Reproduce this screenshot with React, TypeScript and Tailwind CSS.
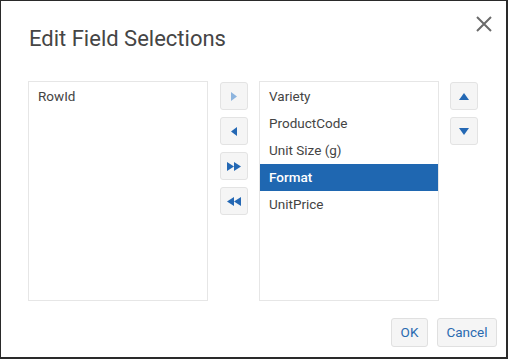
import React from "react";

const rightFields = ["Variety", "ProductCode", "Unit Size (g)", "Format", "UnitPrice"];

const Tri = ({ dir, light }: { dir: "r" | "l" | "u" | "d"; light?: boolean }) => {
  const fill = light ? "#8db4de" : "#2468b4";
  const pts: Record<string, string> = {
    r: "1,0 7,4.5 1,9",
    l: "7,0 1,4.5 7,9",
    u: "0,7 5,0 10,7",
    d: "0,0 10,0 5,7",
  };
  const vb = dir === "u" || dir === "d" ? "0 0 10 7" : "0 0 8 9";
  const w = dir === "u" || dir === "d" ? 10 : 8;
  const h = dir === "u" || dir === "d" ? 7 : 9;
  return (
    <svg width={w} height={h} viewBox={vb}>
      <polygon points={pts[dir]} fill={fill} />
    </svg>
  );
};

const Double = ({ dir }: { dir: "r" | "l" }) => (
  <svg width="14" height="9" viewBox="0 0 14 9">
    {dir === "r" ? (
      <>
        <polygon points="0,0 7,4.5 0,9" fill="#2468b4" />
        <polygon points="7,0 14,4.5 7,9" fill="#2468b4" />
      </>
    ) : (
      <>
        <polygon points="7,0 0,4.5 7,9" fill="#2468b4" />
        <polygon points="14,0 7,4.5 14,9" fill="#2468b4" />
      </>
    )}
  </svg>
);

const IconBtn = ({ children }: { children: React.ReactNode }) => (
  <button
    type="button"
    className="flex h-[28px] w-[28px] items-center justify-center rounded-[3px] border border-[#e3e3e3] bg-[#f5f5f5]"
  >
    {children}
  </button>
);

export default function App() {
  return (
    <div className="h-[359px] w-[508px] bg-white font-['Roboto',sans-serif]">
      <div className="flex h-full w-full flex-col border-t border-l border-r-2 border-b-2 border-[#2a2a2a]">
        <div className="flex items-start justify-between pl-[28px] pr-[13px] pt-[23px]">
          <h1 className="text-[22px] leading-[30px] text-[#454545]">Edit Field Selections</h1>
          <svg width="18" height="18" viewBox="0 0 18 18" className="mt-[-9px]">
            <path d="M2 2 L16 16 M16 2 L2 16" stroke="#6b6b6b" strokeWidth="2" />
          </svg>
        </div>

        <div className="mt-[27px] flex pl-[27px]">
          <div className="h-[220px] w-[180px] border border-[#e6e6e6] pt-[1px]">
            <div className="flex h-[27px] items-center px-[9px] text-[13.5px] text-[#444]">RowId</div>
          </div>

          <div className="ml-[12px] flex flex-col gap-[7px] pt-[1px]">
            <IconBtn>
              <Tri dir="r" light />
            </IconBtn>
            <IconBtn>
              <Tri dir="l" />
            </IconBtn>
            <IconBtn>
              <Double dir="r" />
            </IconBtn>
            <IconBtn>
              <Double dir="l" />
            </IconBtn>
          </div>

          <div className="ml-[11px] h-[220px] w-[180px] border border-[#e6e6e6] pt-[1px]">
            {rightFields.map((f) => (
              <div
                key={f}
                className={
                  f === "Format"
                    ? "flex h-[27px] items-center bg-[#1f67b1] px-[9px] text-[13.5px] font-medium text-white"
                    : "flex h-[27px] items-center px-[9px] text-[13.5px] text-[#444]"
                }
              >
                {f}
              </div>
            ))}
          </div>

          <div className="ml-[11px] flex flex-col gap-[7px] pt-[1px]">
            <IconBtn>
              <Tri dir="u" />
            </IconBtn>
            <IconBtn>
              <Tri dir="d" />
            </IconBtn>
          </div>
        </div>

        <div className="mt-auto mb-[10px] flex justify-end gap-[9px] pr-[9px]">
          <button
            type="button"
            className="h-[29px] w-[37px] rounded-[3px] border border-[#e0e0e0] bg-[#f5f5f5] text-[13.5px] text-[#2a6ab0]"
          >
            OK
          </button>
          <button
            type="button"
            className="h-[29px] w-[60px] rounded-[3px] border border-[#e0e0e0] bg-[#f5f5f5] text-[13.5px] text-[#2a6ab0]"
          >
            Cancel
          </button>
        </div>
      </div>
    </div>
  );
}
